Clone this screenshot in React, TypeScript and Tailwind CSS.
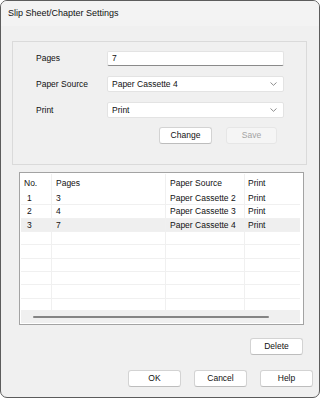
import React from 'react';

const rows = [
  { no: '1', pages: '3', source: 'Paper Cassette 2', print: 'Print' },
  { no: '2', pages: '4', source: 'Paper Cassette 3', print: 'Print' },
  { no: '3', pages: '7', source: 'Paper Cassette 4', print: 'Print', selected: true },
  null, null, null, null, null, null,
];

const Chevron = () => (
  <svg width="7" height="4" viewBox="0 0 7 4" className="shrink-0">
    <path d="M0.5 0.5 L3.5 3.3 L6.5 0.5" fill="none" stroke="#707070" strokeWidth="0.8" />
  </svg>
);

const Btn: React.FC<{ label: string; w: string; disabled?: boolean }> = ({ label, w, disabled }) => (
  <button
    className={
      disabled
        ? `${w} h-[17px] rounded-[3px] border border-[#e6e6e6] bg-[#f5f5f5] text-[#a3a3a3] flex items-center justify-center`
        : `${w} h-[17px] rounded-[3px] border border-[#d3d3d3] border-b-[#bdbdbd] bg-white text-[#111] flex items-center justify-center`
    }
  >
    {label}
  </button>
);

const Select: React.FC<{ value: string }> = ({ value }) => (
  <div className="w-[177px] h-[16px] rounded-[2px] border border-[#e3e3e3] bg-white flex items-center justify-between pl-[4px] pr-[6px]">
    <span>{value}</span>
    <Chevron />
  </div>
);

export default function App() {
  return (
    <div className="w-[320px] h-[399px] bg-white" style={{ fontFamily: '"Liberation Sans", Arial, sans-serif' }}>
      <div className="w-[320px] h-[398px] rounded-[7px] border border-[#5c5c5c] bg-[#f0f0f0] overflow-hidden text-[8.5px] leading-none text-[#111]">
        {/* title bar */}
        <div className="h-[25px] bg-[#f3f3f3] flex items-center pl-[7px] text-[9px]">
          Slip Sheet/Chapter Settings
        </div>

        {/* settings group */}
        <div className="mt-[15px] ml-[11px] w-[295px] h-[124px] border border-[#dadada] pt-[9px]">
          <div className="flex items-center pl-[23px]">
            <span className="w-[71px]">Pages</span>
            <div className="w-[177px] h-[15px] border border-[#e3e3e3] border-b-[#8a8a8a] rounded-[2px] bg-white flex items-center pl-[4px]">
              7
            </div>
          </div>
          <div className="flex items-center pl-[23px] mt-[10px]">
            <span className="w-[71px]">Paper Source</span>
            <Select value="Paper Cassette 4" />
          </div>
          <div className="flex items-center pl-[23px] mt-[10px]">
            <span className="w-[71px]">Print</span>
            <Select value="Print" />
          </div>
          <div className="flex mt-[9px] pl-[146px] gap-[14px]">
            <Btn label="Change" w="w-[53px]" />
            <Btn label="Save" w="w-[51px]" disabled />
          </div>
        </div>

        {/* list */}
        <div className="mt-[7px] ml-[18px] w-[285px] h-[153px] border border-[#a3a3a3] bg-white p-[1px] flex flex-col">
          <div className="h-[18px] flex shrink-0">
            <div className="w-[31px] border-r border-[#f0f0f0] flex items-center pl-[3px]">No.</div>
            <div className="w-[114px] border-r border-[#f0f0f0] flex items-center pl-[4px]">Pages</div>
            <div className="w-[79px] border-r border-[#f0f0f0] flex items-center pl-[4px]">Paper Source</div>
            <div className="w-[55px] flex items-center pl-[3px]">Print</div>
          </div>
          <div className="h-[118px] overflow-hidden shrink-0">
            {rows.map((r, i) => (
              <div
                key={i}
                className={`h-[13.33px] flex border-b border-[#f0f0f0] w-[279px] ${r && r.selected ? 'bg-[#efefef]' : ''}`}
              >
                <div className="w-[31px] border-r border-[#f0f0f0] flex items-center pl-[6px]">{r?.no}</div>
                <div className="w-[114px] border-r border-[#f0f0f0] flex items-center pl-[4px]">{r?.pages}</div>
                <div className="w-[79px] border-r border-[#f0f0f0] flex items-center pl-[4px]">{r?.source}</div>
                <div className="w-[55px] flex items-center pl-[3px]">{r?.print}</div>
              </div>
            ))}
          </div>
          <div className="h-[13px] w-[279px] bg-[#f0f0f0] flex items-center pl-[12px]">
            <div className="w-[236px] h-[2px] rounded-full bg-[#858585]" />
          </div>
        </div>

        <div className="flex justify-end pr-[16px] mt-[13px]">
          <Btn label="Delete" w="w-[53px]" />
        </div>

        <div className="flex justify-end pr-[6px] mt-[15px] gap-[13px]">
          <Btn label="OK" w="w-[53px]" />
          <Btn label="Cancel" w="w-[53px]" />
          <Btn label="Help" w="w-[53px]" />
        </div>
      </div>
    </div>
  );
}
